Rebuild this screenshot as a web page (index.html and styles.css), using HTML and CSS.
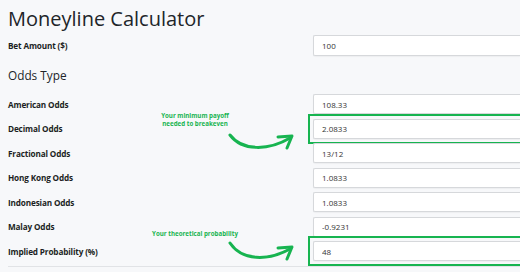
FILE: index.html
```html
<!DOCTYPE html>
<html lang="en">
<head>
<meta charset="UTF-8">
<title>Moneyline Calculator</title>
<link rel="stylesheet" href="styles.css">
</head>
<body>
<div id="page">
	<h1 class="title">Moneyline Calculator</h1>
	<div class="row bet">
		<label class="lbl">Bet Amount ($)</label>
		<input class="field" type="text" value="100">
	</div>
	<h2 class="subtitle">Odds Type</h2>
	<div class="row">
		<label class="lbl">American Odds</label>
		<input class="field" type="text" value="108.33">
	</div>
	<div class="row">
		<label class="lbl">Decimal Odds</label>
		<div class="mark"><input class="field" type="text" value="2.0833"></div>
		<p class="note note-payoff">Your minimum payoff<br>needed to breakeven</p>
		<svg class="arrow arrow-payoff" width="70" height="24" viewBox="0 0 70 24">
			<path d="M2 2 C14 18 40 18 62 5" fill="none" stroke="#17b450" stroke-width="3" stroke-linecap="round"/>
			<path d="M50 4 L64 3 L59 15" fill="none" stroke="#17b450" stroke-width="3" stroke-linecap="round" stroke-linejoin="round"/>
		</svg>
	</div>
	<div class="row">
		<label class="lbl">Fractional Odds</label>
		<input class="field" type="text" value="13/12">
	</div>
	<div class="row">
		<label class="lbl">Hong Kong Odds</label>
		<input class="field" type="text" value="1.0833">
	</div>
	<div class="row">
		<label class="lbl">Indonesian Odds</label>
		<input class="field" type="text" value="1.0833">
	</div>
	<div class="row">
		<label class="lbl">Malay Odds</label>
		<input class="field" type="text" value="-0.9231">
	</div>
	<div class="row">
		<label class="lbl">Implied Probability (%)</label>
		<div class="mark"><input class="field" type="text" value="48"></div>
		<p class="note note-prob">Your theoretical probability</p>
		<svg class="arrow arrow-prob" width="70" height="26" viewBox="0 0 70 26">
			<path d="M2 2 C14 20 40 20 62 8" fill="none" stroke="#17b450" stroke-width="3" stroke-linecap="round"/>
			<path d="M50 7 L64 6 L59 18" fill="none" stroke="#17b450" stroke-width="3" stroke-linecap="round" stroke-linejoin="round"/>
		</svg>
	</div>
	<hr class="rule">
</div>
</body>
</html>
```

FILE: styles.css
```css
html, body{
	margin: 0;
	padding: 0;
	overflow: hidden;
	background-color: #f7f8fa;
}
body{
	font-family: 'Open Sans', sans-serif;
	color: #212529;
}
#page{
	padding: 0 0 0 8px;
}
.title{
	margin: 0;
	padding-top: 5px;
	font-size: 20px;
	font-weight: 400;
	line-height: 28px;
	height: 30px;
}
.row{
	position: relative;
	display: grid;
	grid-template-columns: 305px 1fr;
	grid-template-rows: 20px;
	align-items: center;
	height: 20px;
	margin-bottom: 4.5px;
}
.row.bet{
	grid-template-rows: 21px;
	height: 21px;
	margin-bottom: 0;
}
.lbl{
	font-size: 8.2px;
	font-weight: 700;
	letter-spacing: -0.15px;
	color: #1c1f23;
}
.field{
	box-sizing: border-box;
	display: block;
	height: 20px;
	width: 100%;
	margin: 0;
	padding: 0 8px;
	border: 1px solid #d6d8db;
	border-right: 0;
	border-radius: 2px 0 0 2px;
	background: #fff;
	font-family: 'Open Sans', sans-serif;
	font-size: 8px;
	color: #333;
	box-shadow: 0 1px 1px rgba(0,0,0,0.04);
}
.bet .field{
	height: 21px;
}
.mark{
	margin: -5px 0 -5px -5px;
	padding: 3px 0 3px 3px;
	border: 2px solid #17b450;
	border-right: 0;
}
.subtitle{
	margin: 0;
	height: 38px;
	line-height: 38px;
	font-size: 11.8px;
	font-weight: 400;
}
.note{
	position: absolute;
	margin: 0;
	color: #17b450;
	font-size: 6.2px;
	font-weight: 700;
	line-height: 8px;
	text-align: center;
}
.note-payoff{
	left: 147px;
	top: -7px;
	width: 80px;
}
.note-prob{
	left: 137px;
	top: -11px;
	width: 100px;
}
.arrow{
	position: absolute;
	left: 220px;
}
.arrow-payoff{
	top: 14px;
}
.arrow-prob{
	top: 0;
}
.rule{
	margin: 4.5px 0 0 0;
	border: 0;
	border-top: 1px solid #e1e3e6;
}
```
